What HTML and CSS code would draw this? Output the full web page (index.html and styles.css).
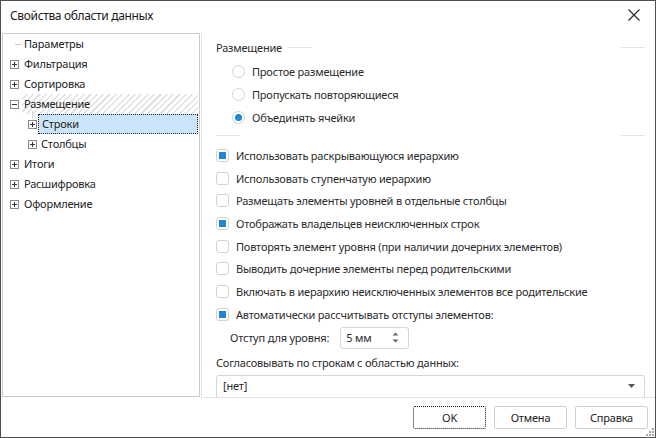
FILE: index.html
```html
<!DOCTYPE html>
<html lang="ru">

<head>
	<meta charset="UTF-8">
	<title>Свойства области данных</title>
	<link rel="stylesheet" href="styles.css">
</head>

<body>

	<div class="dialog">
		<div class="titlebar">
			<span class="title">Свойства области данных</span>
			<span class="close">
				<svg width="12" height="12" viewBox="0 0 12 12"><path d="M0.5 0.5L11.5 11.5M11.5 0.5L0.5 11.5" stroke="#222" stroke-width="1.1" fill="none"/></svg>
			</span>
		</div>

		<div class="main">
			<div class="tree">
				<div class="node">
					<span class="leaf"></span><span class="label">Параметры</span>
				</div>
				<div class="node">
					<svg class="exp" width="9" height="9"><rect x=".5" y=".5" width="8" height="8" fill="#fff" stroke="#8a8a8a"/><path d="M2 4.5h5M4.5 2v5" stroke="#333"/></svg><span class="label">Фильтрация</span>
				</div>
				<div class="node">
					<svg class="exp" width="9" height="9"><rect x=".5" y=".5" width="8" height="8" fill="#fff" stroke="#8a8a8a"/><path d="M2 4.5h5M4.5 2v5" stroke="#333"/></svg><span class="label">Сортировка</span>
				</div>
				<div class="node open">
					<svg class="exp" width="9" height="9"><rect x=".5" y=".5" width="8" height="8" fill="#fff" stroke="#8a8a8a"/><path d="M2 4.5h5" stroke="#333"/></svg><span class="label">Размещение</span>
				</div>
				<div class="node sub selected">
					<span class="exp-wrap"><svg class="exp" width="9" height="9"><rect x=".5" y=".5" width="8" height="8" fill="#fff" stroke="#8a8a8a"/><path d="M2 4.5h5M4.5 2v5" stroke="#333"/></svg></span><span class="label">Строки</span>
				</div>
				<div class="node sub">
					<svg class="exp" width="9" height="9"><rect x=".5" y=".5" width="8" height="8" fill="#fff" stroke="#8a8a8a"/><path d="M2 4.5h5M4.5 2v5" stroke="#333"/></svg><span class="label">Столбцы</span>
				</div>
				<div class="node">
					<svg class="exp" width="9" height="9"><rect x=".5" y=".5" width="8" height="8" fill="#fff" stroke="#8a8a8a"/><path d="M2 4.5h5M4.5 2v5" stroke="#333"/></svg><span class="label">Итоги</span>
				</div>
				<div class="node">
					<svg class="exp" width="9" height="9"><rect x=".5" y=".5" width="8" height="8" fill="#fff" stroke="#8a8a8a"/><path d="M2 4.5h5M4.5 2v5" stroke="#333"/></svg><span class="label">Расшифровка</span>
				</div>
				<div class="node">
					<svg class="exp" width="9" height="9"><rect x=".5" y=".5" width="8" height="8" fill="#fff" stroke="#8a8a8a"/><path d="M2 4.5h5M4.5 2v5" stroke="#333"/></svg><span class="label">Оформление</span>
				</div>
			</div>

			<div class="panel">
				<div class="group-head">
					<span>Размещение</span>
					<span class="rule short"></span>
					<span class="fill"></span>
					<span class="rule"></span>
				</div>

				<div class="radios">
					<div class="opt"><span class="radio"></span>Простое размещение</div>
					<div class="opt"><span class="radio"></span>Пропускать повторяющиеся</div>
					<div class="opt"><span class="radio on"></span>Объединять ячейки</div>
				</div>

				<div class="group-foot">
					<span class="rule"></span>
					<span class="fill"></span>
					<span class="rule"></span>
				</div>

				<div class="checks">
					<div class="opt"><span class="check on"></span>Использовать раскрывающуюся иерархию</div>
					<div class="opt"><span class="check"></span>Использовать ступенчатую иерархию</div>
					<div class="opt"><span class="check"></span>Размещать элементы уровней в отдельные столбцы</div>
					<div class="opt"><span class="check on"></span>Отображать владельцев неисключенных строк</div>
					<div class="opt"><span class="check"></span>Повторять элемент уровня (при наличии дочерних элементов)</div>
					<div class="opt"><span class="check"></span>Выводить дочерние элементы перед родительскими</div>
					<div class="opt"><span class="check"></span>Включать в иерархию неисключенных элементов все родительские</div>
					<div class="opt"><span class="check on"></span>Автоматически рассчитывать отступы элементов:</div>
				</div>

				<div class="indent">
					<span>Отступ для уровня:</span>
					<div class="spin">
						<span>5 мм</span>
						<svg width="7" height="11" viewBox="0 0 7 11"><path d="M3.5 0.5L6.5 3.5H0.5Z M3.5 10.5L6.5 7.5H0.5Z" fill="#666"/></svg>
					</div>
				</div>

				<div class="caption">Согласовывать по строкам с областью данных:</div>
				<div class="combo">
					<span>[нет]</span>
					<svg width="7" height="4" viewBox="0 0 7 4"><path d="M0 0H7L3.5 4Z" fill="#555"/></svg>
				</div>
			</div>
		</div>

		<div class="footer">
			<button class="btn default">OK</button>
			<button class="btn">Отмена</button>
			<button class="btn">Справка</button>
			<svg class="grip" width="9" height="9" viewBox="0 0 9 9">
				<g fill="#a8a8a8">
					<rect x="7" y="1" width="2" height="2"/>
					<rect x="4" y="4" width="2" height="2"/><rect x="7" y="4" width="2" height="2"/>
					<rect x="1" y="7" width="2" height="2"/><rect x="4" y="7" width="2" height="2"/><rect x="7" y="7" width="2" height="2"/>
				</g>
			</svg>
		</div>
	</div>

</body>

</html>
```

FILE: styles.css
```css
*,
*::before,
*::after {
	box-sizing: border-box;
}

body {
	margin: 0;
	padding: 0;
	font-family: "Noto Sans", "Open Sans", sans-serif;
	font-size: 11px;
	letter-spacing: -0.2px;
	color: #2b2b2b;
	background: #fff;
}

.dialog {
	width: 656px;
	height: 438px;
	border: 1px solid #4e4e4e;
	display: flex;
	flex-direction: column;
	background: #fff;
}

/* title bar */
.titlebar {
	height: 32px;
	flex: none;
	display: flex;
	align-items: center;
	justify-content: space-between;
	padding: 0 15px 0 9px;
}

.title {
	font-size: 12px;
	letter-spacing: -0.35px;
	color: #1a1a1a;
	margin-top: -4px;
}

.close {
	display: flex;
	margin-top: -4px;
}

/* body: tree on the left, page on the right */
.main {
	height: 365px;
	flex: none;
	display: flex;
	align-items: flex-start;
	padding-left: 1px;
}

.tree {
	width: 198px;
	height: 364px;
	border: 1px solid #cbcbcb;
	padding: 0 1px 0 7px;
	color: #222;
}

.node {
	height: 20px;
	display: flex;
	align-items: center;
}

.node .exp {
	flex: none;
	display: block;
}

.node .label {
	flex: 1;
	height: 20px;
	line-height: 20px;
	margin-left: 3px;
	padding-left: 2px;
}

.leaf {
	width: 6px;
	height: 1px;
	flex: none;
	border-top: 1px solid #c8c8c8;
	margin-left: 5px;
	margin-right: -2px;
}

.node.open .label {
	background: repeating-linear-gradient(135deg, #fff 0, #fff 3px, #e2e2e2 3px, #e2e2e2 4.5px);
}

.node.sub {
	padding-left: 18px;
}

.node.sub .label {
	margin-left: 1px;
	padding-left: 3px;
}

.node.selected .label {
	background: #cce4f7;
	border: 1px dotted #222;
	line-height: 18px;
}

.exp-wrap {
	position: relative;
	display: flex;
}

/* connector from the parent row */
.exp-wrap::before {
	content: "";
	position: absolute;
	left: 4px;
	top: -9px;
	height: 8px;
	border-left: 1px solid #d6d6d6;
}

.panel {
	width: 454px;
	height: 365px;
	margin-left: 1px;
	border-left: 1px solid #e2e2e2;
	border-bottom: 1px solid #e2e2e2;
	padding: 4px 10px 0 14px;
	overflow: hidden;
}

.group-head,
.group-foot {
	display: flex;
	align-items: center;
}

.group-head {
	height: 20px;
}

.group-head .rule.short {
	margin-left: 6px;
}

.rule {
	width: 24px;
	height: 1px;
	background: #e4e4e4;
}

.fill {
	flex: 1;
}

.group-foot {
	margin-top: 6px;
	height: 1px;
}

.radios {
	margin-top: 3px;
	padding-left: 16px;
}

.radios .opt {
	height: 23px;
}

.opt {
	display: flex;
	align-items: center;
}

.radio,
.check {
	width: 13px;
	height: 13px;
	flex: none;
	margin-right: 7px;
	border: 1px solid #d2d2d2;
	background: #fff;
	display: flex;
	align-items: center;
	justify-content: center;
}

.radio {
	border-radius: 50%;
}

.radio.on::after {
	content: "";
	width: 7px;
	height: 7px;
	border-radius: 50%;
	background: #1f86d4;
}

.check {
	border-radius: 3px;
}

.check.on::after {
	content: "";
	width: 7px;
	height: 7px;
	background: #1f86d4;
}

.checks {
	margin-top: 8px;
}

.checks .opt {
	height: 22.7px;
}

.indent {
	margin-top: 1px;
	padding-left: 14px;
	display: flex;
	align-items: center;
	gap: 11px;
}

.spin {
	width: 69px;
	height: 22px;
	border: 1px solid #d6d6d6;
	border-radius: 3px;
	display: flex;
	align-items: center;
	justify-content: space-between;
	padding: 0 9px 0 5px;
}

.caption {
	margin-top: 6px;
	height: 16px;
	line-height: 16px;
}

.combo {
	margin-top: 4px;
	height: 26px;
	border: 1px solid #d6d6d6;
	border-radius: 3px;
	display: flex;
	align-items: center;
	justify-content: space-between;
	padding: 0 9px 4px 6px;
}

/* buttons */
.footer {
	flex: 1;
	display: flex;
	align-items: flex-start;
	justify-content: flex-end;
	gap: 8px;
	padding: 8px 7px 0 0;
	position: relative;
}

.btn {
	width: 73px;
	height: 23px;
	font-family: inherit;
	font-size: 11px;
	letter-spacing: -0.2px;
	color: #222;
	background: #fff;
	border: 1px solid #d0d0d0;
	border-radius: 2px;
}

.btn.default {
	border: 1px dotted #111;
}

.grip {
	position: absolute;
	right: 1px;
	bottom: 1px;
}
```
